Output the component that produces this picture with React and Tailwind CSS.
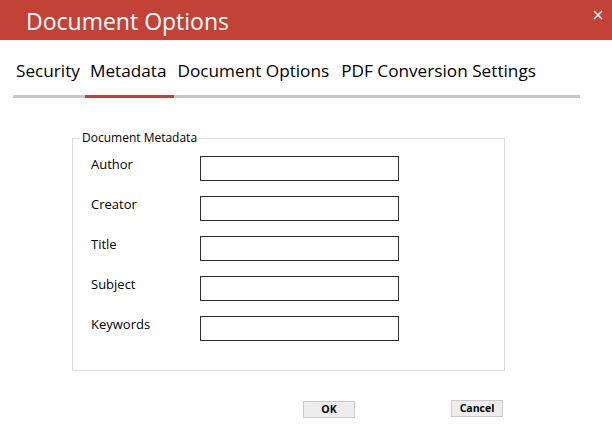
const fields = ['Author', 'Creator', 'Title', 'Subject', 'Keywords']

const tabs = [
	{ label: 'Security', cls: 'pl-[3px] pr-[5px]' },
	{ label: 'Metadata', cls: 'pl-[5px] pr-[8px]', active: true },
	{ label: 'Document Options', cls: 'pl-[3px] pr-[6px]' },
	{ label: 'PDF Conversion Settings', cls: 'px-[6px]' },
]

export default function App() {
	return (
		<div className="w-[612px] h-[439px] bg-white text-black font-['Open_Sans',sans-serif] overflow-hidden">
			<header className="h-[40px] bg-[#c34237] flex flex-row justify-between items-start">
				<h1 className="pl-[26px] text-[23px] leading-[42px] text-white">Document Options</h1>
				<button className="mt-[10px] mr-[9px]" aria-label="Close">
					<svg width="10" height="10" viewBox="0 0 10 10" fill="none" stroke="white" strokeWidth="1.5">
						<path d="M1 1L9 9M9 1L1 9" />
					</svg>
				</button>
			</header>

			<nav className="ml-[13px] mt-[19px] w-[567px] border-b-[3px] border-[#c8c8c8]">
				<ul className="flex flex-row">
					{tabs.map((t) => (
						<li
							key={t.label}
							className={`${t.cls} text-[17.2px] leading-[24px] pb-[12px] -mb-[3px] border-b-[3px] ${
								t.active ? 'border-[#c34237]' : 'border-transparent'
							}`}
						>
							{t.label}
						</li>
					))}
				</ul>
			</nav>

			<fieldset className="ml-[72px] mt-[32px] w-[433px] border border-[#dadada] pt-[10px] pb-[29px]">
				<legend className="ml-[7px] px-[2px] text-[12px] leading-[16px]">Document Metadata</legend>
				<div className="pl-[18px] flex flex-col gap-[15px]">
					{fields.map((f) => (
						<div key={f} className="flex flex-row items-start">
							<label className="w-[109px] text-[13px] leading-[17px]">{f}</label>
							<input type="text" className="w-[199px] h-[25px] border border-[#2e2e2e] bg-white outline-none" />
						</div>
					))}
				</div>
			</fieldset>

			<div className="mt-[29px] pl-[303px] flex flex-row items-start gap-[96px]">
				<button className="mt-[1px] w-[52px] h-[17px] bg-[#ededed] border border-[#cacaca] text-[10.5px] font-bold leading-[15px]">
					OK
				</button>
				<button className="w-[52px] h-[17px] bg-[#ededed] border border-[#cacaca] text-[10.5px] font-bold leading-[15px]">
					Cancel
				</button>
			</div>
		</div>
	)
}
